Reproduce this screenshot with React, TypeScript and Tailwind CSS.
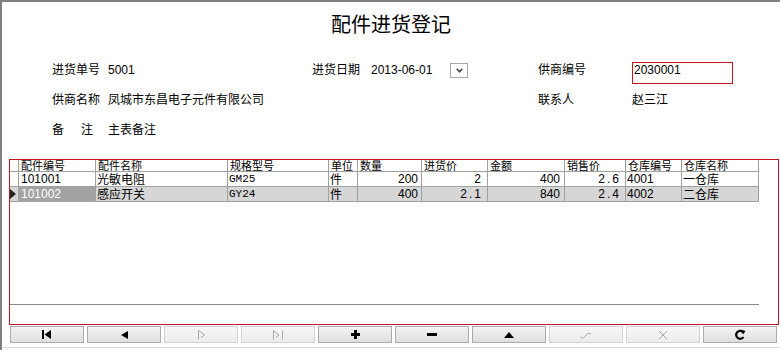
import React from "react";

const rows = [
  { id: "101001", name: "光敏电阻", spec: "GM25", unit: "件", qty: "200", price: "2", amount: "400", sale: "2.6", wh: "4001", whName: "一仓库" },
  { id: "101002", name: "感应开关", spec: "GY24", unit: "件", qty: "400", price: "2.1", amount: "840", sale: "2.4", wh: "4002", whName: "二仓库" },
];

const headers = ["配件编号", "配件名称", "规格型号", "单位", "数量", "进货价", "金额", "销售价", "仓库编号", "仓库名称"];

const gridCols = "grid grid-cols-[9px_77px_132px_101px_29px_64px_66px_77px_61px_56px_77px] w-[749px]";

function Icon({ kind }: { kind: number }) {
  const g = "#a9a9a9";
  switch (kind) {
    case 0:
      return (
        <svg width="10" height="9" viewBox="0 0 10 9">
          <rect x="0" y="0" width="2" height="9" fill="#000" />
          <polygon points="9,0 9,9 2.5,4.5" fill="#000" />
        </svg>
      );
    case 1:
      return (
        <svg width="7" height="8" viewBox="0 0 7 8">
          <polygon points="7,0 7,8 0,4" fill="#000" />
        </svg>
      );
    case 2:
      return (
        <svg width="9" height="10" viewBox="0 0 9 10">
          <path d="M1.5 0.5 V9.5 M1.5 0.5 L7.5 5 L4 7.5" stroke={g} strokeWidth="1" fill="none" />
        </svg>
      );
    case 3:
      return (
        <svg width="11" height="10" viewBox="0 0 11 10">
          <path d="M0.5 0.5 V9.5 M0.5 0.5 L6 5 L3 7.5 M9.5 0.5 V9.5" stroke={g} strokeWidth="1" fill="none" />
        </svg>
      );
    case 4:
      return (
        <svg width="9" height="9" viewBox="0 0 9 9">
          <rect x="3" y="0" width="3" height="9" fill="#000" />
          <rect x="0" y="3" width="9" height="3" fill="#000" />
        </svg>
      );
    case 5:
      return (
        <svg width="10" height="3" viewBox="0 0 10 3">
          <rect x="0" y="0" width="10" height="3" fill="#000" />
        </svg>
      );
    case 6:
      return (
        <svg width="10" height="6" viewBox="0 0 10 6">
          <polygon points="0,6 10,6 5,0" fill="#000" />
        </svg>
      );
    case 7:
      return (
        <svg width="12" height="8" viewBox="0 0 12 8">
          <path d="M0.5 6 L3 7.5 L8 2 L11 3" stroke={g} strokeWidth="1" fill="none" />
        </svg>
      );
    case 8:
      return (
        <svg width="10" height="10" viewBox="0 0 10 10">
          <path d="M1 1 L9 9 M9 1 L1 9" stroke={g} strokeWidth="1" fill="none" />
        </svg>
      );
    default:
      return (
        <svg width="11" height="11" viewBox="0 0 11 11">
          <path d="M8 3 A4 4 0 1 0 8.5 8" stroke="#000" strokeWidth="2.2" fill="none" />
          <polygon points="5.5,0.5 10.5,2 8,5.5" fill="#000" />
        </svg>
      );
  }
}

export default function App() {
  const disabled = [2, 3, 7, 8];
  return (
    <div className="w-[780px] h-[350px] bg-white border-t-2 border-l-2 border-[#808080] overflow-hidden text-[12px] text-black font-['Liberation_Sans','Noto_Sans_CJK_SC',sans-serif]">
      <div className="h-[53px] pt-[10px] flex justify-center">
        <div className="text-[20px] leading-[24px] font-['Noto_Sans_CJK_SC',sans-serif] font-normal">配件进货登记</div>
      </div>

      <div className="pl-[50px]">
        <div className="flex items-center h-[30px]">
          <span className="w-[56px]">进货单号</span>
          <span className="w-[204px]">5001</span>
          <span className="w-[59px]">进货日期</span>
          <span className="w-[79px]">2013-06-01</span>
          <span className="w-[18px] h-[15px] border border-[#a8a8a8] flex items-center justify-center">
            <svg width="7" height="5" viewBox="0 0 7 5">
              <path d="M0.8 0.8 L3.5 3.8 L6.2 0.8" stroke="#444" strokeWidth="1.6" fill="none" />
            </svg>
          </span>
          <span className="w-[70px]" />
          <span className="w-[94px]">供商编号</span>
          <span className="w-[101px] h-[22px] mt-[5px] border border-[#c4161c] pl-[1px] leading-[14px]">2030001</span>
        </div>
        <div className="flex items-center h-[30px]">
          <span className="w-[56px]">供商名称</span>
          <span className="w-[430px]">凤城市东昌电子元件有限公司</span>
          <span className="w-[94px]">联系人</span>
          <span>赵三江</span>
        </div>
        <div className="flex items-center h-[30px]">
          <span className="w-[29px]">备</span>
          <span className="w-[27px]">注</span>
          <span>主表备注</span>
        </div>
      </div>

      <div className="mt-[14px] ml-[7px] w-[770px] h-[166px] border border-[#c4161c] flex flex-col">
        <div className={`${gridCols} h-[12px]`}>
          <div className="border-r border-b border-[#a0a0a0]" />
          {headers.map((h) => (
            <div key={h} className="border-r border-b border-[#a0a0a0] pl-[2px] whitespace-nowrap text-[11px] leading-[11px] font-['Noto_Sans_CJK_SC',sans-serif]">
              {h}
            </div>
          ))}
        </div>
        {rows.map((r, i) => {
          const sel = i === 1;
          const bg = sel ? "bg-[#d6d6d6]" : "bg-white";
          const cell = `border-r border-b border-[#a0a0a0] h-[15px] leading-[14px] whitespace-nowrap ${bg}`;
          return (
            <div key={r.id} className={gridCols}>
              <div className={`${cell} flex items-center justify-start`}>
                {sel && (
                  <svg width="6" height="10" viewBox="0 0 6 10">
                    <polygon points="0,0 6,5 0,10" fill="#222" />
                  </svg>
                )}
              </div>
              <div className={`${cell} pl-[2px] ${sel ? "!bg-[#a3a3a3] text-white" : ""}`}>{r.id}</div>
              <div className={`${cell} pl-[1px] font-['Noto_Sans_CJK_SC',sans-serif] text-[12px]`}>{r.name}</div>
              <div className={`${cell} pl-[1px] font-['Liberation_Mono',monospace] text-[11px]`}>{r.spec}</div>
              <div className={`${cell} pl-[1px] font-['Noto_Sans_CJK_SC',sans-serif] text-[12px]`}>{r.unit}</div>
              <div className={`${cell} text-right pr-[3px]`}>{r.qty}</div>
              <div className={`${cell} text-right pr-[4px] tracking-[2px]`}>{r.price}</div>
              <div className={`${cell} text-right pr-[4px]`}>{r.amount}</div>
              <div className={`${cell} text-right pr-[4px] tracking-[2px]`}>{r.sale}</div>
              <div className={`${cell} pl-[1px]`}>{r.wh}</div>
              <div className={`${cell} pl-[1px] font-['Noto_Sans_CJK_SC',sans-serif] text-[12px]`}>{r.whName}</div>
            </div>
          );
        })}
        <div className="flex-1" />
        <div className="w-[749px] h-[20px] border-t border-[#8a8a8a]" />
      </div>

      <div className="mt-[1px] ml-[8px] flex gap-[3px] h-[17px]">
        {Array.from({ length: 10 }).map((_, i) => {
          const dis = disabled.includes(i);
          return (
            <div
              key={i}
              className={`w-[74px] h-[17px] flex items-center justify-center border bg-gradient-to-b ${
                dis ? "border-[#d2d2d2] from-[#f7f7f7] to-[#ececec]" : "border-[#acacac] from-[#f4f4f4] to-[#dedede]"
              }`}
            >
              <Icon kind={i} />
            </div>
          );
        })}
      </div>
      <div className="mt-[4px] h-px bg-[#dcdcdc]" />
    </div>
  );
}
